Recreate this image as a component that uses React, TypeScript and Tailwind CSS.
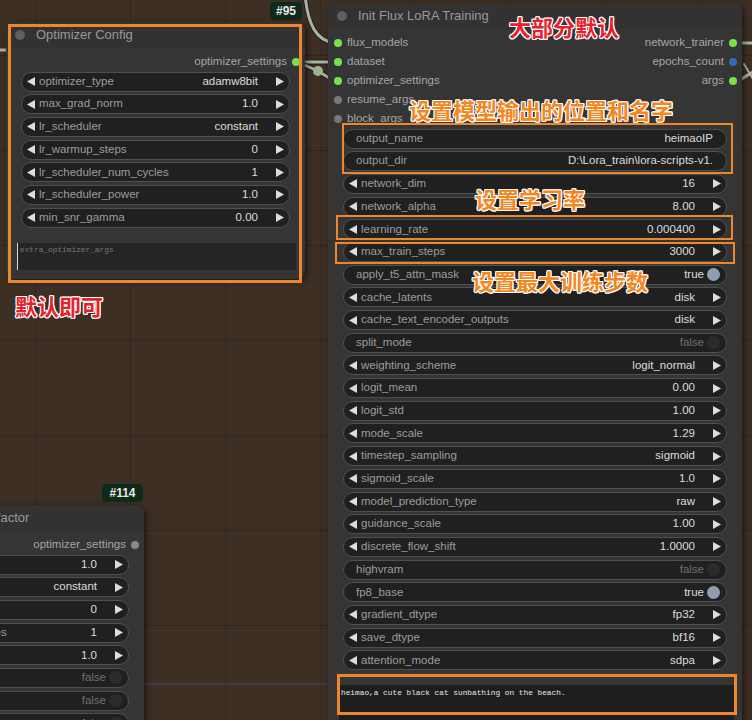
type Wd =
  | { t: "num"; label: string; value: string }
  | { t: "text"; label: string; value: string }
  | { t: "bool"; label: string; value: boolean }

type Slot = { label: string; color: string }

function ArrowL() {
  return (
    <svg width="8" height="9" viewBox="0 0 8 9" className="shrink-0">
      <path d="M0 4.5 8 0v9z" fill="#dddddd" />
    </svg>
  )
}

function ArrowR() {
  return (
    <svg width="8" height="9" viewBox="0 0 8 9" className="shrink-0">
      <path d="M8 4.5 0 0v9z" fill="#dddddd" />
    </svg>
  )
}

function Widget({ w }: { w: Wd }) {
  if (w.t === "num") {
    return (
      <div className="flex h-[20px] items-center rounded-full border border-[#4f4f4f] bg-[#202020] pl-[5px] pr-[5px]">
        <ArrowL />
        <span className="ml-[4px] whitespace-nowrap text-[#9c9c9c]">{w.label}</span>
        <span className="ml-auto mr-[18px] shrink-0 whitespace-nowrap text-[#dddddd]">{w.value}</span>
        <ArrowR />
      </div>
    )
  }
  if (w.t === "text") {
    return (
      <div className="flex h-[20px] items-center rounded-full border border-[#4f4f4f] bg-[#202020] pl-[12px] pr-[13px]">
        <span className="whitespace-nowrap text-[#9c9c9c]">{w.label}</span>
        <span className="ml-auto whitespace-nowrap text-[#dddddd]">{w.value}</span>
      </div>
    )
  }
  return (
    <div className="flex h-[20px] items-center rounded-full border border-[#4f4f4f] bg-[#202020] pl-[12px] pr-[6px]">
      <span className="whitespace-nowrap text-[#9c9c9c]">{w.label}</span>
      <span className={w.value ? "ml-auto text-[#dddddd]" : "ml-auto text-[#6f6f6f]"}>
        {w.value ? "true" : "false"}
      </span>
      <span
        className={
          w.value
            ? "ml-[3px] h-[13px] w-[13px] rounded-full bg-[#8e9fb3]"
            : "ml-[3px] h-[13px] w-[13px] rounded-full bg-[#2c2c2c]"
        }
      />
    </div>
  )
}

function Node({
  title,
  className,
  inputs,
  outputs,
  widgets,
  children,
}: {
  title: string
  className: string
  inputs: Slot[]
  outputs: Slot[]
  widgets: Wd[]
  children?: React.ReactNode
}) {
  const rows = Math.max(inputs.length, outputs.length)
  return (
    <div className={"absolute rounded-[8px] bg-[#353535] shadow-[2px_2px_6px_rgba(0,0,0,0.55)] " + className}>
      <div className="flex h-[26px] items-center rounded-t-[8px] bg-[#323232]">
        <span className="ml-[9px] h-[10px] w-[10px] shrink-0 rounded-full bg-[#5f5f5f]" />
        <span className="ml-[11px] whitespace-nowrap text-[13px] text-[#999999]">{title}</span>
      </div>
      <div className="pt-[4.5px] text-[11.5px] text-[#a5a5a5]">
        {Array.from({ length: rows }).map((_, i) => (
          <div key={i} className="flex h-[19px] items-center">
            {inputs[i] ? (
              <div className="flex items-center pl-[6px]">
                <span className="h-[8px] w-[8px] rounded-full" style={{ background: inputs[i].color }} />
                <span className="ml-[5px]">{inputs[i].label}</span>
              </div>
            ) : null}
            {outputs[i] ? (
              <div className="ml-auto flex items-center pr-[5px]">
                <span>{outputs[i].label}</span>
                <span className="ml-[5px] h-[8px] w-[8px] rounded-full" style={{ background: outputs[i].color }} />
              </div>
            ) : null}
          </div>
        ))}
      </div>
      <div className="mx-[15px] flex flex-col gap-[2.7px] text-[11.5px] leading-none">
        {widgets.map((w) => (
          <Widget key={w.label} w={w} />
        ))}
      </div>
      {children}
    </div>
  )
}

const GREEN = "#79e04f"
const GRAY = "#777777"
const BLUE = "#2f6fb0"

const optimizerWidgets: Wd[] = [
  { t: "num", label: "optimizer_type", value: "adamw8bit" },
  { t: "num", label: "max_grad_norm", value: "1.0" },
  { t: "num", label: "lr_scheduler", value: "constant" },
  { t: "num", label: "lr_warmup_steps", value: "0" },
  { t: "num", label: "lr_scheduler_num_cycles", value: "1" },
  { t: "num", label: "lr_scheduler_power", value: "1.0" },
  { t: "num", label: "min_snr_gamma", value: "0.00" },
]

const adafactorWidgets: Wd[] = [
  { t: "num", label: "max_grad_norm", value: "1.0" },
  { t: "num", label: "lr_scheduler", value: "constant" },
  { t: "num", label: "lr_warmup_steps", value: "0" },
  { t: "num", label: "lr_scheduler_num_cycles", value: "1" },
  { t: "num", label: "lr_scheduler_power", value: "1.0" },
  { t: "bool", label: "relative_step", value: false },
  { t: "bool", label: "scale_parameter", value: false },
  { t: "bool", label: "warmup_init", value: false },
]

const initWidgets: Wd[] = [
  { t: "text", label: "output_name", value: "heimaoIP" },
  { t: "text", label: "output_dir", value: "D:\\Lora_train\\lora-scripts-v1." },
  { t: "num", label: "network_dim", value: "16" },
  { t: "num", label: "network_alpha", value: "8.00" },
  { t: "num", label: "learning_rate", value: "0.000400" },
  { t: "num", label: "max_train_steps", value: "3000" },
  { t: "bool", label: "apply_t5_attn_mask", value: true },
  { t: "num", label: "cache_latents", value: "disk" },
  { t: "num", label: "cache_text_encoder_outputs", value: "disk" },
  { t: "bool", label: "split_mode", value: false },
  { t: "num", label: "weighting_scheme", value: "logit_normal" },
  { t: "num", label: "logit_mean", value: "0.00" },
  { t: "num", label: "logit_std", value: "1.00" },
  { t: "num", label: "mode_scale", value: "1.29" },
  { t: "num", label: "timestep_sampling", value: "sigmoid" },
  { t: "num", label: "sigmoid_scale", value: "1.0" },
  { t: "num", label: "model_prediction_type", value: "raw" },
  { t: "num", label: "guidance_scale", value: "1.00" },
  { t: "num", label: "discrete_flow_shift", value: "1.0000" },
  { t: "bool", label: "highvram", value: false },
  { t: "bool", label: "fp8_base", value: true },
  { t: "num", label: "gradient_dtype", value: "fp32" },
  { t: "num", label: "save_dtype", value: "bf16" },
  { t: "num", label: "attention_mode", value: "sdpa" },
]

const outline =
  "[text-shadow:1px_1px_0_#fff,-1px_-1px_0_#fff,1px_-1px_0_#fff,-1px_1px_0_#fff,0_1px_0_#fff,0_-1px_0_#fff,1px_0_0_#fff,-1px_0_0_#fff]"

export default function App() {
  return (
    <div className="relative h-[720px] w-[752px] overflow-hidden bg-[#3e2f25] font-['Liberation_Sans',Arial,sans-serif] [background-image:linear-gradient(to_right,rgba(0,0,0,0.2)_1px,transparent_1px),linear-gradient(to_bottom,rgba(0,0,0,0.2)_1px,transparent_1px)] [background-position:35px_55px] [background-size:95px_95px]">
      {/* links */}
      <svg className="absolute left-0 top-0" width="752" height="720">
        <g fill="none" strokeLinecap="round">
          <path d="M305 -5 C308 25 316 40 334 43" stroke="#1e1e1e" strokeWidth="5" />
          <path d="M305 -5 C308 25 316 40 334 43" stroke="#aab3a3" strokeWidth="3" />
          <path d="M300 62 L334 62" stroke="#1e1e1e" strokeWidth="5" />
          <path d="M300 62 L334 62" stroke="#aab3a3" strokeWidth="3" />
          <path d="M302 64 L318 71 L334 81" stroke="#1e1e1e" strokeWidth="5" />
          <path d="M302 64 L318 71 L334 81" stroke="#aab3a3" strokeWidth="3" />
          <path d="M-5 50 L8 50" stroke="#aab3a3" strokeWidth="3" />
          <path d="M738 43 L756 43" stroke="#aab3a3" strokeWidth="3" />
          <path d="M738 81 L756 70" stroke="#aab3a3" strokeWidth="3" />
          <path d="M744 64 L756 84" stroke="#aab3a3" strokeWidth="2" />
          <path d="M145 684 L328 684" stroke="#4a3d5e" strokeWidth="1.5" />
        </g>
        <circle cx="318" cy="71" r="5" fill="#9fae99" />
      </svg>

      <Node
        title="Optimizer Config"
        className="left-[6px] top-[22px] w-[299px]"
        inputs={[]}
        outputs={[{ label: "optimizer_settings", color: GREEN }]}
        widgets={optimizerWidgets}
      >
        <div className="ml-[11px] mr-[9px] mt-[15px] h-[27px] border-l-[1.5px] border-[#d8d8d8] bg-[#252525] px-[2px] pt-[4px] font-['Liberation_Mono',monospace] text-[7.8px] leading-none text-[#777777]">
          extra_optimizer_args
        </div>
        <div className="h-[9px]" />
      </Node>

      <Node
        title="Init Flux LoRA Training"
        className="left-[328px] top-[3px] w-[414px]"
        inputs={[
          { label: "flux_models", color: GREEN },
          { label: "dataset", color: GREEN },
          { label: "optimizer_settings", color: GREEN },
          { label: "resume_args", color: GRAY },
          { label: "block_args", color: GRAY },
        ]}
        outputs={[
          { label: "network_trainer", color: GREEN },
          { label: "epochs_count", color: BLUE },
          { label: "args", color: GREEN },
        ]}
        widgets={initWidgets}
      >
        <div className="ml-[11px] mr-[8px] mt-[15px] h-[60px] bg-[#1e1e1e] px-[2px] pt-[5px] font-['Liberation_Mono',monospace] text-[7.8px] leading-none text-[#e6e6e6]">
          heimao,a cute black cat sunbathing on the beach.
        </div>
      </Node>

      <Node
        title="Optimizer Config Adafactor"
        className="left-[-156px] top-[505px] w-[300px]"
        inputs={[]}
        outputs={[{ label: "optimizer_settings", color: "#8a8a8a" }]}
        widgets={adafactorWidgets}
      />

      {/* node id badges */}
      <div className="absolute left-[270px] top-[2px] flex h-[18px] w-[32px] items-center justify-center rounded-[4px] bg-[#0f2a18] text-[12px] font-bold text-[#e8e8e8]">
        #95
      </div>
      <div className="absolute left-[102px] top-[484px] flex h-[18px] w-[41px] items-center justify-center rounded-[4px] bg-[#0f2a18] text-[12px] font-bold text-[#e8e8e8]">
        #114
      </div>

      {/* annotation boxes */}
      <div className="absolute left-[8px] top-[24px] h-[259px] w-[294px] border-[3px] border-[#f0862a]" />
      <div className="absolute left-[342px] top-[123px] h-[51px] w-[391px] border-[2.5px] border-[#f0862a]" />
      <div className="absolute left-[336px] top-[215px] h-[25px] w-[397px] border-[2.5px] border-[#f0862a]" />
      <div className="absolute left-[335px] top-[242px] h-[22px] w-[400px] border-[2.5px] border-[#f0862a]" />
      <div className="absolute left-[337px] top-[674px] h-[41px] w-[400px] border-[3px] border-[#f0862a]" />

      {/* annotation text */}
      <div
        className={
          "absolute font-['Noto_Sans_CJK_SC',sans-serif] text-[22px] font-bold leading-none " + outline
        }
      >
        <span className="absolute left-[15px] top-[294px] whitespace-nowrap text-[#e5222b]">默认即可</span>
        <span className="absolute left-[509px] top-[15px] whitespace-nowrap text-[#e5222b]">大部分默认</span>
        <span className="absolute left-[409px] top-[98px] whitespace-nowrap text-[#f5871f]">设置模型输出的位置和名字</span>
        <span className="absolute left-[475px] top-[187px] whitespace-nowrap text-[#f5871f]">设置学习率</span>
        <span className="absolute left-[472px] top-[269px] whitespace-nowrap text-[#f5871f]">设置最大训练步数</span>
      </div>
    </div>
  )
}
